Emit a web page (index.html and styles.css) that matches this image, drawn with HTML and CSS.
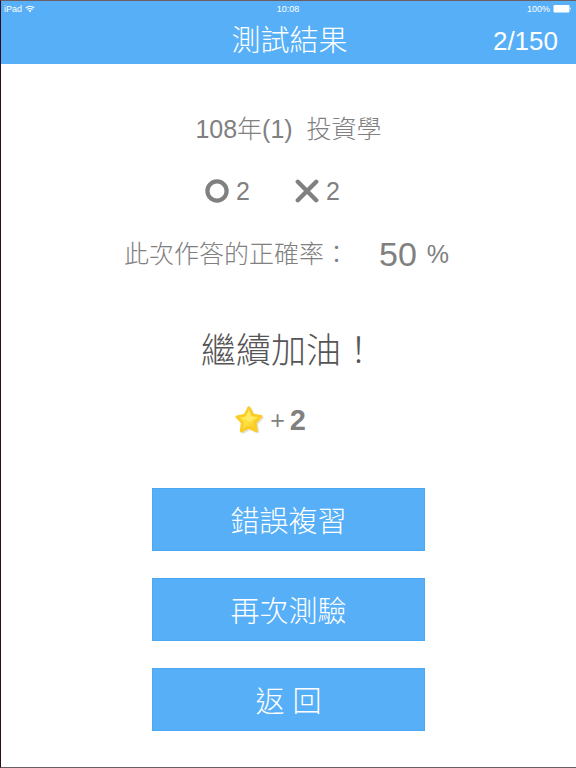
FILE: index.html
```html
<!DOCTYPE html>
<html lang="zh-Hant">
<head>
    <meta charset="UTF-8">
    <meta name="viewport" content="width=device-width, initial-scale=1.0">
    <title>測試結果</title>
    <link rel="stylesheet" href="styles.css">
</head>
<body>
    <header class="top">
        <div class="status-bar">
            <div class="carrier">
                iPad
                <svg class="wifi" viewBox="0 0 18 14" aria-hidden="true">
                    <path d="M1.5 5.2a10.6 10.6 0 0 1 15 0M4.3 8a6.6 6.6 0 0 1 9.4 0" fill="none" stroke="#fff" stroke-width="2"/>
                    <path d="M6.4 10.2a3.7 3.7 0 0 1 5.2 0L9 13z" fill="#fff"/>
                </svg>
            </div>
            <div>10:08</div>
            <div class="power">
                100%
                <svg class="battery" viewBox="0 0 19 8" aria-hidden="true">
                    <rect x="0.5" width="16" height="7.5" rx="1" fill="#fff"/>
                    <path d="M17 2.2q1.6 1.5 0 3z" fill="#fff"/>
                </svg>
            </div>
        </div>
        <div class="title-bar">
            <h1>測試結果</h1>
            <span class="counter">2/150</span>
        </div>
    </header>

    <main>
        <h2 class="exam">108年(1)&nbsp; 投資學</h2>

        <div class="score">
            <div class="score-item">
                <svg class="mark" viewBox="0 0 24 24" role="img" aria-label="答對">
                    <circle cx="12" cy="12" r="9.6" fill="none" stroke="#808080" stroke-width="4.200"/>
                </svg>
                <span>2</span>
            </div>
            <div class="score-item">
                <svg class="mark" viewBox="0 0 24 24" role="img" aria-label="答錯">
                    <path d="M2.8 2.8l18.400 18.400M21.200 2.800L2.800 21.200" stroke="#808080" stroke-width="4.400" stroke-linecap="round"/>
                </svg>
                <span>2</span>
            </div>
        </div>

        <div class="accuracy">
            <span class="label">此次作答的正確率：</span>
            <span class="rate">50</span>
            <span>%</span>
        </div>

        <p class="message">繼續加油！</p>

        <div class="reward">
            <svg class="star" viewBox="0 0 30 30" aria-hidden="true">
                <defs>
                    <linearGradient id="gold" x1="0" y1="0" x2="1" y2="1">
                        <stop offset="0" stop-color="#ffdf3c"/>
                        <stop offset="0.5" stop-color="#fee140"/>
                        <stop offset="1" stop-color="#f7bd14"/>
                    </linearGradient>
                </defs>
                <path class="star-shadow" d="M15.500 4l3.700 7.500 8 1.300-5.700 6.200 1.300 8-7.600-3.500-7.200 3.800 1-8.500L3.500 13l7.800-1.500z"/>
                <path d="M13.800 2.600l3.900 7.400 8.300 1.500-5.800 6.200 1.300 8.200-7.700-3.600-7.600 3.900 1.100-8.600L1.900 11.800l8.100-1.700z" fill="url(#gold)" stroke="#fbcb26" stroke-width="2.800" stroke-linejoin="round"/>
                <path d="M13.800 4.200l2.600 6.900 7 1.200q-5.600 1.200-8 5.200-3.500-3.200-10-4.700l5.500-1.300z" fill="#fff27a" opacity="0.600"/>
            </svg>
            <span class="plus">+</span>
            <strong>2</strong>
        </div>

        <div class="actions">
            <button type="button">錯誤複習</button>
            <button type="button">再次測驗</button>
            <button type="button">返 回</button>
        </div>
    </main>
</body>
</html>
```
FILE: styles.css
```css
* {
    box-sizing: border-box;
}
body {
    margin: 0;
    min-height: 100vh;
    background-color: #fff;
    border: 1px solid #6a5f62;
    border-left-color: #2d0b20;
    border-right: none;
    font-family: "Liberation Sans", "Noto Sans CJK TC", sans-serif;
    font-weight: 300;
    color: #808080;
}
.top {
    background-color: #57aff7;
    color: #fff;
}
.status-bar {
    display: grid;
    grid-template-columns: 1fr auto 1fr;
    align-items: center;
    height: 16px;
    padding: 0 4px 0 3px;
    font-size: 9px;
}
.carrier,
.power {
    display: flex;
    align-items: center;
    gap: 3px;
}
.power {
    justify-content: flex-end;
}
.wifi {
    width: 10px;
    height: 8px;
}
.battery {
    width: 19px;
    height: 8px;
}
.title-bar {
    display: grid;
    grid-template-columns: 1fr auto 1fr;
    align-items: center;
    height: 47px;
    padding: 2px 18px 0 20px;
}
h1 {
    grid-column: 2;
    margin: 0;
    font-size: 29px;
    font-weight: 300;
    line-height: 45px;
}
.counter {
    justify-self: end;
    font-size: 26px;
    line-height: 45px;
}
main {
    display: flex;
    flex-direction: column;
    align-items: center;
    padding: 48px 0 36px;
}
.exam {
    margin: 0;
    font-size: 25px;
    font-weight: 300;
    line-height: 34px;
}
.score {
    display: flex;
    gap: 45px;
    margin: 28px 32px 0 0;
    font-size: 25px;
    line-height: 34px;
}
.score-item {
    display: flex;
    align-items: center;
    gap: 7px;
}
.mark {
    width: 24px;
    height: 24px;
}
.accuracy {
    display: flex;
    align-items: center;
    gap: 10px;
    margin: 24px 4px 0 0;
    font-size: 25px;
    line-height: 44px;
}
.rate {
    margin-left: 20px;
    font-size: 34px;
}
.message {
    margin: 50px 0 0;
    font-size: 35px;
    line-height: 50px;
    color: #555;
}
.reward {
    display: flex;
    align-items: center;
    gap: 5px;
    margin: 27px 36px 0 0;
    font-size: 29px;
    line-height: 34px;
}
.reward strong {
    font-weight: 700;
}
.star {
    width: 30px;
    height: 30px;
}
.star-shadow {
    fill: #d8d8d8;
    stroke: #e4e4e4;
    stroke-width: 3;
    stroke-linejoin: round;
}
.plus {
    font-size: 25px;
}
.actions {
    display: flex;
    flex-direction: column;
    gap: 27px;
    width: 273px;
    max-width: 90%;
    margin-top: 51px;
}
button {
    height: 63px;
    padding: 0 0 2px;
    border: 1px solid #4ba8f5;
    background-color: #57aff7;
    font: inherit;
    font-size: 29px;
    color: #fff;
    cursor: pointer;
}
```
